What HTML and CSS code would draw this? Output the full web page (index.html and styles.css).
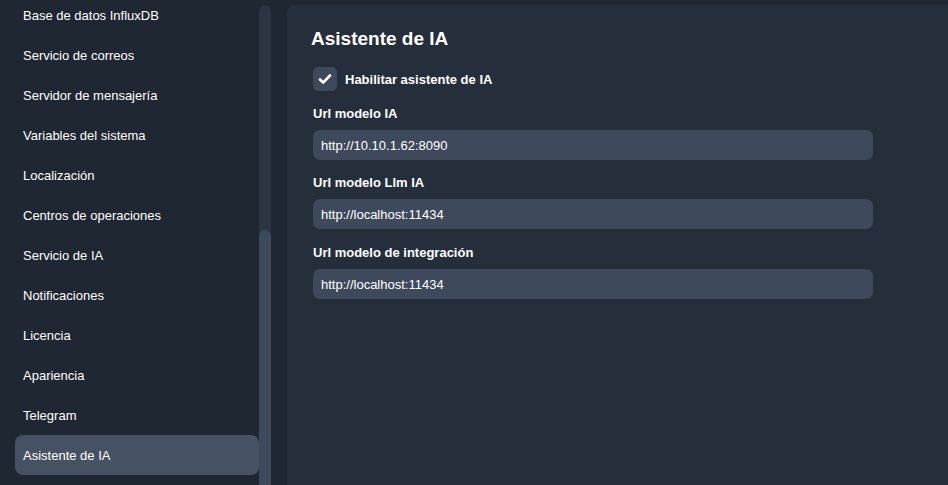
FILE: index.html
```html
<!DOCTYPE html>
<html lang="es">
<head>
  <meta charset="UTF-8">
  <meta name="viewport" content="width=device-width, initial-scale=1.0">
  <title>Asistente de IA</title>
  <link rel="stylesheet" href="styles.css">
</head>
<body>
  <div class="layout">
    <aside class="sidebar">
      <nav class="menu">
        <a href="#">Base de datos InfluxDB</a>
        <a href="#">Servicio de correos</a>
        <a href="#">Servidor de mensajería</a>
        <a href="#">Variables del sistema</a>
        <a href="#">Localización</a>
        <a href="#">Centros de operaciones</a>
        <a href="#">Servicio de IA</a>
        <a href="#">Notificaciones</a>
        <a href="#">Licencia</a>
        <a href="#">Apariencia</a>
        <a href="#">Telegram</a>
        <a href="#" class="active">Asistente de IA</a>
      </nav>
      <!-- Barra de desplazamiento del menú -->
      <div class="scroll-track">
        <div class="scroll-thumb"></div>
      </div>
    </aside>
    <main class="panel">
      <h1>Asistente de IA</h1>
      <label class="check-row">
        <span class="checkbox">
          <svg width="14" height="14" viewBox="0 0 14 14"><path d="M2 7.5l3.2 3.2L12 3.5" fill="none" stroke="#fff" stroke-width="2.6" stroke-linecap="round" stroke-linejoin="round"/></svg>
        </span>
        Habilitar asistente de IA
      </label>
      <div class="field">
        <label>Url modelo IA</label>
        <input type="text" value="http://10.10.1.62:8090">
      </div>
      <div class="field">
        <label>Url modelo Llm IA</label>
        <input type="text" value="http://localhost:11434">
      </div>
      <div class="field">
        <label>Url modelo de integración</label>
        <input type="text" value="http://localhost:11434">
      </div>
    </main>
  </div>
</body>
</html>
```

FILE: styles.css
```css
/* Reset básico */
* {
  box-sizing: border-box;
  margin: 0;
  padding: 0;
}
body {
  font-family: 'Liberation Sans', Arial, sans-serif;
  background: #1f2732;
  color: #fff;
  height: 485px;
  overflow: hidden;
}
.layout {
  display: flex;
  height: 100%;
}
.sidebar {
  display: flex;
  width: 271px;
  flex-shrink: 0;
}
.menu {
  flex: 1;
  display: flex;
  flex-direction: column;
  padding-left: 15px;
  margin-top: -5px;
}
.menu a {
  display: block;
  height: 40px;
  line-height: 42px;
  padding-left: 8px;
  color: #fff;
  text-decoration: none;
  font-size: 13px;
  border-radius: 8px;
}
.menu a.active {
  background: #465263;
}
.scroll-track {
  width: 12px;
  margin-top: 5px;
  background: #2c3643;
  border-radius: 6px 6px 0 0;
  display: flex;
  flex-direction: column;
  justify-content: flex-end;
}
.scroll-thumb {
  height: 255px;
  background: #3e4a5b;
  border-radius: 6px 6px 0 0;
}
.panel {
  flex: 1;
  margin: 5px 0 0 16px;
  background: #252e3b;
  border-radius: 8px 0 0 0;
  padding: 23px 24px;
}
h1 {
  font-size: 19px;
  line-height: 22px;
  font-weight: bold;
  margin-bottom: 17px;
}
.check-row {
  display: flex;
  align-items: center;
  gap: 8px;
  margin-left: 2px;
  font-size: 13px;
  font-weight: bold;
}
.checkbox {
  width: 24px;
  height: 24px;
  border-radius: 5px;
  background: #3e4a5c;
  display: flex;
  align-items: center;
  justify-content: center;
}
.field {
  margin-left: 2px;
  margin-top: 15px;
  width: 560px;
}
.field:last-child {
  margin-top: 16px;
}
.field label {
  display: block;
  font-size: 13px;
  line-height: 16px;
  font-weight: bold;
  margin-bottom: 8px;
}
.field input {
  display: block;
  width: 100%;
  height: 30px;
  border: none;
  border-radius: 7px;
  background: #3e4a5c;
  color: #fff;
  font-family: inherit;
  font-size: 13px;
  padding: 0 8px;
  outline: none;
}
```
